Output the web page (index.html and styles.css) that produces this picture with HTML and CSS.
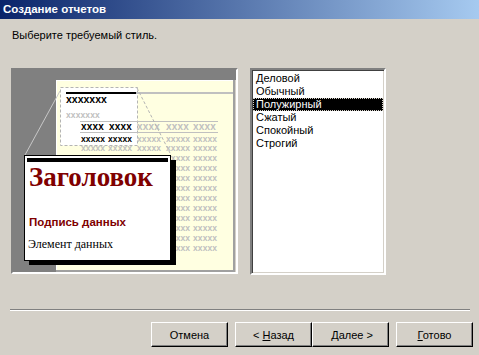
FILE: index.html
```html
<!DOCTYPE html>
<html lang="ru">

<head>
    <meta charset="UTF-8">
    <title>Создание отчетов</title>
    <link rel="stylesheet" href="styles.css">
</head>

<body>
    <div class="window">
        <div class="titlebar">Создание отчетов</div>
        <p class="prompt">Выберите требуемый стиль.</p>

        <div class="main">
            <div class="preview">
                <svg width="223" height="202" viewBox="13 70 223 202">
                    <defs>
                        <g id="xrow" class="x-row x-gray">
                            <text x="81">xxxxx</text>
                            <text x="108">xxxxx</text>
                            <text x="137">xxxxx</text>
                            <text x="166">xxxxx</text>
                            <text x="193">xxxxx</text>
                        </g>
                    </defs>

                    <!-- background and paper -->
                    <rect x="13" y="70" width="223" height="202" fill="#808080" />
                    <rect x="56" y="80" width="180" height="192" fill="#d4d0c8" />
                    <rect x="56" y="80" width="179" height="192" fill="#a0a0a0" />
                    <rect x="56" y="80" width="177" height="190" fill="#ffffff" />
                    <rect x="57" y="81" width="176" height="189" fill="#ffffe1" />

                    <!-- zoomed region -->
                    <rect x="60.5" y="87.5" width="77" height="58" fill="#ffffff" stroke="#b4b4b4" stroke-dasharray="3 2" />
                    <rect x="66" y="92" width="70" height="2" fill="#000000" />
                    <rect x="136" y="92" width="97" height="2" fill="#c0c0c0" />

                    <text x="66" y="103" class="x-head">xxxxxxx</text>
                    <text x="66" y="118" class="x-row x-gray">xxxxxxx</text>

                    <line x1="80" y1="121.5" x2="218" y2="121.5" stroke="#c0c0c0" />
                    <text x="81" y="130" class="x-bold">xxxx</text>
                    <text x="109" y="130" class="x-bold">xxxx</text>
                    <text x="137" y="130" class="x-bold x-gray">xxxx</text>
                    <text x="166" y="130" class="x-bold x-gray">xxxx</text>
                    <text x="193" y="130" class="x-bold x-gray">xxxx</text>
                    <line x1="80" y1="132.5" x2="218" y2="132.5" stroke="#c0c0c0" />

                    <text x="81" y="142" class="x-row">xxxxx</text>
                    <text x="108" y="142" class="x-row">xxxxx</text>
                    <text x="137" y="142" class="x-row x-gray">xxxxx</text>
                    <text x="166" y="142" class="x-row x-gray">xxxxx</text>
                    <text x="193" y="142" class="x-row x-gray">xxxxx</text>

                    <use href="#xrow" y="151" />
                    <use href="#xrow" y="161" />
                    <use href="#xrow" y="171" />
                    <use href="#xrow" y="181" />
                    <use href="#xrow" y="191" />
                    <use href="#xrow" y="201" />
                    <use href="#xrow" y="211" />
                    <use href="#xrow" y="221" />
                    <use href="#xrow" y="231" />
                    <use href="#xrow" y="241" />
                    <use href="#xrow" y="251" />

                    <!-- magnifier lines -->
                    <line x1="60" y1="91" x2="25" y2="155" stroke="#c8c8c8" />
                    <line x1="137" y1="88" x2="171" y2="155" stroke="#b4b4b4" stroke-dasharray="3 2" />

                    <!-- magnified card -->
                    <rect x="29" y="160" width="147" height="105" fill="#000000" />
                    <rect x="24.5" y="155.5" width="146" height="105" fill="#ffffff" stroke="#000000" />
                    <rect x="27" y="158" width="141" height="4" fill="#000000" />
                    <text x="29" y="186" class="card-title">Заголовок</text>
                    <text x="29" y="226" class="card-label">Подпись данных</text>
                    <text x="28" y="248" class="card-item">Элемент данных</text>
                </svg>
            </div>

            <ul class="style-list">
                <li>Деловой</li>
                <li>Обычный</li>
                <li class="selected">Полужирный</li>
                <li>Сжатый</li>
                <li>Спокойный</li>
                <li>Строгий</li>
            </ul>
        </div>

        <div class="separator"></div>

        <div class="buttons">
            <button class="btn">Отмена</button>
            <button class="btn btn-back">&lt; <u>Н</u>азад</button>
            <button class="btn">&nbsp;<u>Д</u>алее &gt;</button>
            <button class="btn btn-finish"><u>Г</u>отово</button>
        </div>
    </div>
</body>
</html>
```

FILE: styles.css
```css
body {
    margin: 0;
    background-color: #d4d0c8;
    font-family: "Liberation Sans", Arial, sans-serif;
    font-size: 11px;
    color: #000;
}

.window {
    width: 479px;
    height: 355px;
    overflow: hidden;
}

.titlebar {
    height: 19px;
    line-height: 18px;
    padding-left: 3px;
    background: linear-gradient(to right, #0a246a, #a6caf0);
    color: #fff;
    font-weight: bold;
    font-size: 11.5px;
}

.prompt {
    margin: 10px 0 0 12px;
    line-height: 13px;
}

.main {
    display: flex;
    margin-top: 26px;
    padding-left: 11px;
}

.preview {
    width: 223px;
    height: 202px;
    border: 2px solid;
    border-color: #808080 #ffffff #ffffff #808080;
    box-shadow: inset 1px 1px #404040, inset -1px -1px #d4d0c8;
}

.preview svg {
    display: block;
}

.x-head {
    font: bold 10.5px "Liberation Sans", Arial, sans-serif;
    fill: #000;
}

.x-bold {
    font: bold 10px "Liberation Sans", Arial, sans-serif;
    letter-spacing: 0.2px;
    fill: #000;
}

.x-row {
    font: bold 8.5px "Liberation Sans", Arial, sans-serif;
    letter-spacing: 0.1px;
    fill: #000;
}

.x-gray {
    fill: #c0c0c0;
}

.card-title {
    font: bold 27px "Liberation Serif", "Times New Roman", serif;
    fill: #800000;
}

.card-label {
    font: bold 11.5px "Liberation Sans", Arial, sans-serif;
    fill: #800000;
}

.card-item {
    font: 12px "Liberation Serif", "Times New Roman", serif;
    fill: #000;
}

.style-list {
    list-style: none;
    margin: 0 0 0 12px;
    padding: 2px 1px;
    width: 130px;
    height: 199px;
    background: #fff;
    border: 2px solid;
    border-color: #808080 #ffffff #ffffff #808080;
    box-shadow: inset 1px 1px #404040, inset -1px -1px #d4d0c8;
    box-sizing: content-box;
}

.style-list li {
    height: 13px;
    line-height: 13px;
    padding-left: 3px;
    white-space: nowrap;
}

.style-list li.selected {
    background: #000;
    color: #fff;
    outline: 1px dotted #d4d0c8;
    outline-offset: -1px;
}

.separator {
    width: 460px;
    height: 0;
    margin: 34px 0 0 10px;
    border-top: 1px solid #808080;
    border-bottom: 1px solid #fff;
}

.buttons {
    display: flex;
    margin-top: 11px;
    padding-left: 151px;
}

.btn {
    width: 77px;
    height: 25px;
    padding: 0;
    background: #d4d0c8;
    font-family: "Liberation Sans", Arial, sans-serif;
    font-size: 11px;
    color: #000;
    border: 1px solid;
    border-color: #fff #000 #000 #fff;
    box-shadow: inset -1px -1px #808080;
}

.btn-back {
    margin-left: 7px;
}

.btn-finish {
    margin-left: 7px;
}
```
